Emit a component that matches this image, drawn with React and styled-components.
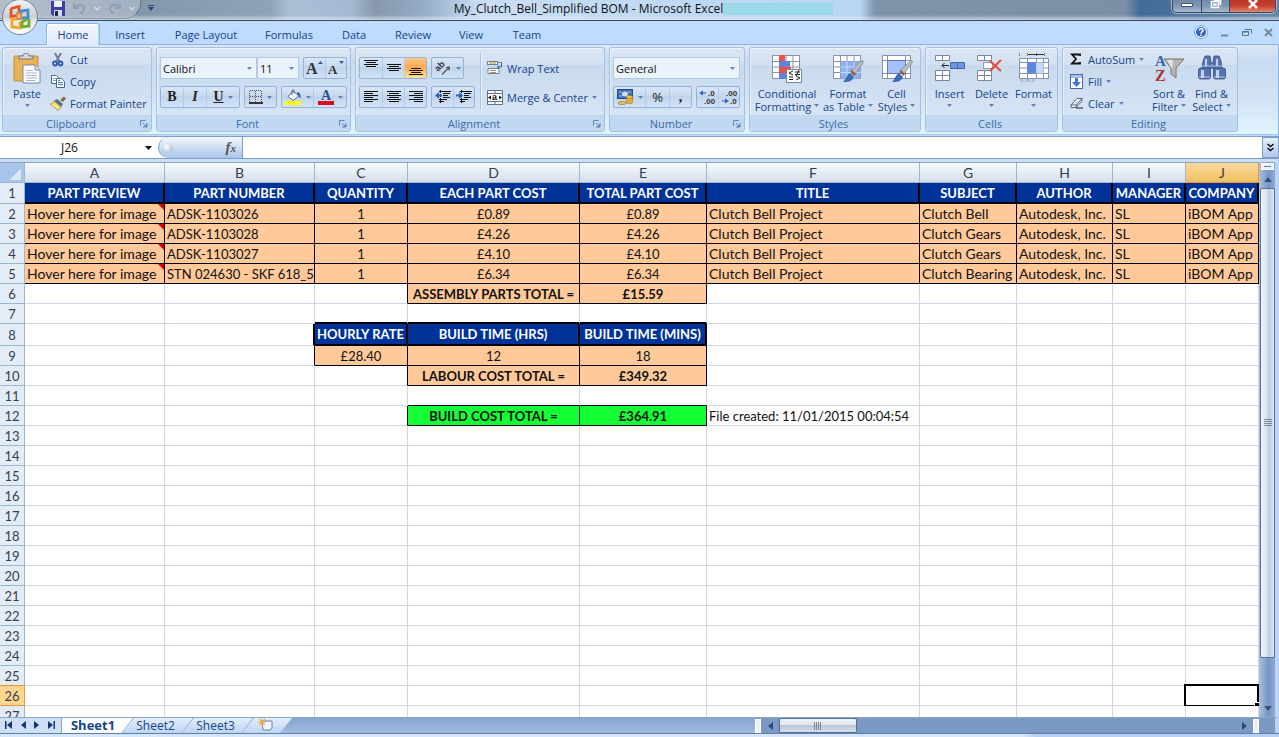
import React, { useState } from 'react';
import styled, { createGlobalStyle } from 'styled-components';

const GlobalStyle = createGlobalStyle`
    * { box-sizing: border-box; }
    body {
        margin: 0;
        font-family: "Open Sans", "Noto Sans", sans-serif;
        font-size: 11px;
        color: #15428b;
        overflow: hidden;
    }
    button, input, select {
        font: inherit;
        color: inherit;
        border: 0;
        margin: 0;
        padding: 0;
        background: none;
        border-radius: 0;
    }
    svg { flex: none; }
`

const Window = styled.div`
    display: flex;
    flex-direction: column;
    height: 100vh;
    background: #bfdbff;
`

/* ---------- title bar ---------- */

const TitleBar = styled.header`
    position: relative;
    display: flex;
    justify-content: space-between;
    align-items: flex-start;
    height: 21px;
    flex: none;
    border-bottom: 1px solid #3c4a5a;
    background:
        linear-gradient(rgba(255, 255, 255, 0) 75%, rgba(225, 235, 245, 0.6) 95%),
        linear-gradient(90deg, #a9b6c4 0, #8496aa 140px, #8fa3b8 270px, #a9bfd6 290px, #a4bad2 350px,
            #8798ad 375px, #93aac6 420px, #c9ddf3 480px, #bfd8f3 700px, #b9d6f5 860px,
            #7f93ab 875px, #7d8fa6 1125px, #436b98 1140px, #5f82a8 100%);
`

const QuickAccess = styled.div`
    display: flex;
    align-items: center;
    height: 19px;
    width: 141px;
    padding: 0 10px 2px 51px;
    gap: 8px;
    border-right: 1px solid #66788c;
    border-bottom: 1px solid #8a9bb0;
    border-radius: 0 0 16px 0;
    background: rgba(185, 195, 206, 0.6);
`

const QuickButton = styled.button`
    display: flex;
    align-items: center;
`

const QuickMore = styled.button`
    display: flex;
    padding: 5px 7px;
`

const TitleText = styled.div`
    display: flex;
    flex: 1;
    justify-content: center;
    align-items: center;
    height: 17px;
    padding-right: 46px;
    font-size: 12px;
    color: #111;
    white-space: nowrap;
`

const Patch = styled.span`
    width: 110px;
    height: 12px;
    background: #9bd8e8;
`

const WindowButtons = styled.div`
    display: flex;
    height: 13px;
    margin-right: 3px;
    border: 1px solid #3b4a5e;
    border-top: 0;
    border-radius: 0 0 5px 5px;
    box-shadow: 0 0 1px 1px rgba(255, 255, 255, 0.5);
    overflow: hidden;
`

const WindowButton = styled.button`
    display: flex;
    justify-content: center;
    align-items: flex-start;
    width: ${props => props.$width};
    border-left: 1px solid #3b4a5e;
    background: ${props => props.$close
        ? 'linear-gradient(#b8392a, #c9402d 50%, #e08a76)'
        : 'linear-gradient(#6f8aa8, #7f98b4 50%, #a7bbd1)'};
    &:first-child { border-left: 0; }
`

const Orb = styled.button`
    position: absolute;
    z-index: 2;
    top: 0;
    left: 2px;
    width: 37px;
    height: 36px;
`

/* ---------- ribbon tabs ---------- */

const TabBar = styled.nav`
    display: flex;
    align-items: flex-end;
    height: 24px;
    flex: none;
    padding-left: 46px;
    background: #bfdbff;
    border-bottom: 1px solid #8db2e3;
`

const Tab = styled.button`
    height: 22px;
    width: ${props => props.$width};
    margin-bottom: -1px;
    padding-bottom: 1px;
    text-align: center;
    border: 1px solid transparent;
    border-bottom: 0;
    border-radius: 3px 3px 0 0;
    ${props => props.$active && `
        background: linear-gradient(#f2f7fe, #dfeafb);
        border-color: #8db2e3;
        box-shadow: inset 1px 1px 0 #fff, inset -1px 0 0 #a8e0f0;
    `}
`

const TabTools = styled.div`
    display: flex;
    align-items: center;
    gap: 12px;
    height: 22px;
    margin-left: auto;
    padding-right: 5px;
    padding-bottom: 2px;
    button { display: flex; }
`

/* ---------- ribbon ---------- */

const Ribbon = styled.div`
    display: flex;
    gap: 4px;
    height: 90px;
    flex: none;
    padding: 2px 2px 3px 2px;
    border-right: 1px solid #8db2e3;
    background: linear-gradient(#dce8f7, #c8dbf1 18%, #d3e3f5 60%, #dff4fc);
    border-bottom: 1px solid #a9c9ec;
`

const Group = styled.section`
    display: flex;
    flex-direction: column;
    width: ${props => props.$width};
    height: 85px;
    border: 1px solid #a5c0e0;
    border-radius: 3px;
    box-shadow: inset 1px 1px 0 rgba(255, 255, 255, 0.5);
    background: linear-gradient(#dbe6f4, #d3e0f1 20%, #c9daee 21%, #dae8f7);
    overflow: hidden;
`

const GroupBody = styled.div`
    display: flex;
    flex: 1;
    padding: ${props => props.$padding || '0 3px'};
    gap: ${props => props.$gap || '0'};
`

const GroupFooter = styled.footer`
    display: flex;
    align-items: center;
    height: 16px;
    padding: 1px 3px 0 0;
    background: #c1d8f0;
    color: #3e6aaa;
    line-height: 15px;
`

const GroupName = styled.span`
    flex: 1;
    text-align: center;
`

const SmallColumn = styled.div`
    display: flex;
    flex-direction: column;
`

const SmallButton = styled.button`
    display: flex;
    align-items: center;
    gap: 4px;
    height: 22px;
    white-space: nowrap;
`

const LargeButton = styled.button`
    display: flex;
    flex: none;
    flex-direction: column;
    align-items: center;
    width: ${props => props.$width};
    padding-top: 5px;
    line-height: 13px;
    white-space: nowrap;
    svg:first-child { margin-bottom: 2px; }
`

const LabelLine = styled.span`
    display: flex;
    align-items: center;
    justify-content: center;
    gap: 3px;
    height: 13px;
`

const ControlStack = styled.div`
    display: flex;
    flex-direction: column;
    gap: 7px;
    padding-top: 9px;
`

const ControlRow = styled.div`
    display: flex;
    gap: ${props => props.$gap || '4px'};
`

const ButtonSet = styled.div`
    display: flex;
    height: 22px;
    border: 1px solid #93b3da;
    border-radius: 2px;
    background: linear-gradient(#d9e6f6, #c6d8ee 45%, #bfd3ec 46%, #d3e3f6);
`

const ToolButton = styled.button`
    display: flex;
    align-items: center;
    justify-content: center;
    gap: 4px;
    width: ${props => props.$width || '22px'};
    color: #222;
    border-left: 1px solid #b3cae6;
    &:first-child { border-left: 0; }
    ${props => props.$on && `
        background: linear-gradient(#fbc58a, #fdab4a 45%, #fdb95c 60%, #ffe390);
    `}
`

const SelectBox = styled.label`
    display: flex;
    align-items: center;
    width: ${props => props.$width};
    height: 22px;
    padding: 0 4px 0 2px;
    border: 1px solid #b3cae6;
    background: #eaf2fb;
    color: #111;
    select {
        flex: 1;
        min-width: 0;
        appearance: none;
        outline: 0;
    }
`

const Divider = styled.div`
    width: 2px;
    height: 56px;
    margin: 5px 1px 0 1px;
    border-left: 1px solid #a5c0e0;
    border-right: 1px solid #f0f6fd;
`

/* ---------- formula bar ---------- */

const FormulaBar = styled.div`
    display: flex;
    height: 23px;
    flex: none;
    margin-top: 1px;
    border-top: 1px solid #7f9fc8;
    border-bottom: 1px solid #7f9fc8;
    background: #fff;
`

const NameBox = styled.label`
    display: flex;
    align-items: center;
    width: 158px;
    padding-right: 6px;
    font-size: 12px;
    color: #111;
    input {
        width: 138px;
        flex: 1;
        padding-right: 6px;
        text-align: center;
    }
`

const FxPanel = styled.div`
    display: flex;
    align-items: center;
    justify-content: space-between;
    width: 85px;
    padding: 0 6px 0 4px;
    border: 1px solid #7f9fc8;
    border-width: 0 1px;
    border-radius: 11px 0 0 11px;
    background: linear-gradient(#f4f8fd, #a9c4e9);
`

const Knob = styled.span`
    width: 10px;
    height: 10px;
    border-radius: 5px;
    background: radial-gradient(circle at 35% 35%, #fff, #9fb0c8);
`

const FxButton = styled.button`
    font: italic bold 15px "Liberation Serif", serif;
    color: #555;
    sub { font-size: 11px; line-height: 0; vertical-align: 0; }
`

const FormulaInput = styled.input`
    flex: 1;
    min-width: 0;
    padding: 0 4px;
`

const ExpandButton = styled.button`
    display: flex;
    align-items: center;
    justify-content: center;
    width: 17px;
    border: 1px solid #7f9fc8;
    background: linear-gradient(#e6effb, #b0c8ea);
`

const BarGap = styled.div`
    height: 3px;
    flex: none;
    background: #cddff5;
`

/* ---------- sheet ---------- */

const SheetArea = styled.main`
    display: flex;
    flex: 1;
    min-height: 0;
`

const GridPane = styled.div`
    flex: 1;
    min-width: 0;
    overflow: hidden;
    background: #fff;
    border-top: 1px solid #8ba5c8;
`

const Grid = styled.table`
    width: 100%;
    table-layout: fixed;
    border-collapse: separate;
    border-spacing: 0;
    font-family: Lato, "Open Sans", sans-serif;
    font-size: 14px;
    line-height: 18px;
    color: #111;
    th, td { padding: 0; }
`

const Corner = styled.th`
    height: 20px;
    background: linear-gradient(135deg, #a9c4e9 50%, #dce8f8 51%) 9px 5px / 12px 12px no-repeat #a9c4e9;
    border-right: 1px solid #9eb6ce;
    border-bottom: 1px solid #9eb6ce;
`

const ColumnHead = styled.th`
    height: 20px;
    font-weight: normal;
    color: #333f50;
    border-right: 1px solid ${props => props.$active ? '#f29536' : '#9eb6ce'};
    border-bottom: 1px solid ${props => props.$active ? '#f29536' : '#9eb6ce'};
    background: ${props => props.$active
        ? 'linear-gradient(#f9d99f, #f1c15f)'
        : 'linear-gradient(#f6fafd, #d5deea)'};
`

const RowHead = styled.th`
    height: ${props => props.$height}px;
    font-size: 13px;
    font-weight: normal;
    color: #333f50;
    border-right: 1px solid ${props => props.$active ? '#f29536' : '#9eb6ce'};
    border-bottom: 1px solid ${props => props.$active || props.$beforeActive ? '#f29536' : '#9eb6ce'};
    background: ${props => props.$active ? '#ffd58d' : '#e4ecf7'};
`

const fills = { head: '#003399', peach: '#ffc999', green: '#14ff36' }

const Cell = styled.td`
    position: relative;
    height: ${props => props.$height}px;
    white-space: nowrap;
    text-align: ${props => props.$align};
    font-weight: ${props => props.$bold ? 'bold' : 'normal'};
    font-size: ${props => props.$small ? '13px' : '14px'};
    color: ${props => props.$fill === 'head' ? '#fff' : '#111'};
    background: ${props => fills[props.$fill] || '#fff'};
    border-right: ${props => props.$right};
    border-bottom: ${props => props.$bottom};
    && { padding: 0 ${props => props.$align === 'left' ? '2px' : '0'}; }
    ${props => props.$note && `
        &::after {
            content: '';
            position: absolute;
            top: 0;
            right: 0;
            border: 3px solid #e00000;
            border-left-color: transparent;
            border-bottom-color: transparent;
        }
    `}
`

const Selection = styled.span`
    position: absolute;
    inset: -2px -1px -2px -2px;
    border: 2px solid #000;
    &::after {
        content: '';
        position: absolute;
        right: -2px;
        bottom: -3px;
        width: 4px;
        height: 5px;
        border: 1px solid #fff;
        border-width: 1px 0 0 1px;
        background: #000;
    }
`

const VScroll = styled.div`
    display: flex;
    flex-direction: column;
    align-items: center;
    width: 20px;
    padding: 1px 0 0 1px;
    border-right: 4px solid #bcd3f5;
    background: linear-gradient(90deg, #a8c0e0, #7796c3 60%, #8aaad6);
`

const SplitBox = styled.span`
    width: ${props => props.$across ? '13px' : '6px'};
    height: ${props => props.$across ? '7px' : '14px'};
    border: 1px solid #fff;
    background: #e9f1fb;
    box-shadow: inset 0 0 0 2px #e9f1fb, inset 0 0 0 4px #5c7fae;
`

const ScrollArrow = styled.button`
    display: flex;
    align-items: center;
    justify-content: center;
    width: 18px;
    height: 18px;
`

const VTrack = styled.div`
    flex: 1;
    width: 15px;
`

const VThumb = styled.div`
    display: flex;
    align-items: center;
    justify-content: center;
    height: 92%;
    border: 1px solid #56719c;
    border-radius: 2px;
    background: linear-gradient(90deg, #eef2f8, #dbe4ee 45%, #bccbdc 60%, #dde7f2);
`

const BottomBar = styled.footer`
    display: flex;
    height: 16px;
    flex: none;
    border-top: 1px solid #8ba5c8;
    border-right: 4px solid #bcd3f5;
    background: linear-gradient(#86a4d2, #a2bbe0);
`

const SheetNav = styled.div`
    display: flex;
    align-items: center;
    justify-content: space-between;
    width: 62px;
    padding: 0 6px 1px 5px;
    border-right: 1px solid #8ba5c8;
    background: #cfe0f6;
    button { display: flex; }
`

const SheetTabs = styled.div`
    display: flex;
    font-size: 13px;
    line-height: 15px;
`

const SheetTab = styled.button`
    height: 15px;
    width: 71px;
    padding-right: ${props => props.$active ? '9px' : '4px'};
    white-space: nowrap;
    font-size: ${props => props.$active ? '13px' : '12px'};
    font-weight: ${props => props.$active ? 'bold' : 'normal'};
    background: linear-gradient(${props => props.$active ? '#fff, #fff' : '#e3eefb, #bfd5f2'});
    clip-path: polygon(0 100%, ${props => props.$active ? '0' : '12px'} 0, 100% 0, calc(100% - 12px) 100%);
    & + & { margin-left: -11px; }
`

const InsertTab = styled(SheetTab)`
    width: 50px;
`

const HScroll = styled.div`
    display: flex;
    align-items: center;
    width: 520px;
    margin-left: auto;
    padding-right: 16px;
    background: #7b99c3;
`

const HTrack = styled.div`
    flex: 1;
    height: 15px;
`

const HThumb = styled.div`
    display: flex;
    align-items: center;
    justify-content: center;
    width: 17%;
    height: 15px;
    border: 1px solid #56719c;
    border-radius: 2px;
    background: linear-gradient(#f0f4f9, #dde5ee 45%, #b9c8d8 50%, #d5dfe9);
`

const StatusBar = styled.div`
    height: 4px;
    flex: none;
    border-top: 1px solid #5b7db1;
    background: linear-gradient(90deg, #d7e6f9 80%, #b7d0f2 81%);
`

/* ---------- icons ---------- */

const Arrow = ({ color = '#5f84b8' }) => (
    <svg width="5" height="3" viewBox="0 0 5 3"><path d="M0 0h5L2.500 3z" fill={color} /></svg>
)

const Chevron = () => (
    <svg width="6" height="5" viewBox="0 0 6 5"><path d="M.5 1L3 4l2.500-3" fill="none" stroke="#f0f4f9" /></svg>
)

const Launcher = () => (
    <svg width="9" height="9" viewBox="0 0 9 9" fill="none" stroke="#5f84b8">
        <path d="M1.500 6.500v-5h5M4 4l3 3M8 4v4H4" />
        <path d="M8 5v3H5z" fill="#5f84b8" stroke="none" />
    </svg>
)

const OfficeIcon = () => (
    <svg width="37" height="36" viewBox="0 0 37 36">
        <defs>
            <linearGradient id="orb" x1="0" y1="0" x2="0" y2="1">
                <stop offset="0" stopColor="#f4f4f6" />
                <stop offset="0.500" stopColor="#c9ced6" />
                <stop offset="0.600" stopColor="#e2e6ea" />
                <stop offset="1" stopColor="#fff" />
            </linearGradient>
        </defs>
        <circle cx="18" cy="17" r="17.500" fill="url(#orb)" stroke="#77808e" />
        <g fill="none" strokeWidth="2.800">
            <path d="M9 8.500l8-2v6M9 8.500v8l5-1" stroke="#e2521d" />
            <path d="M19 14v-3l7-1v8h-6" stroke="#3d8fd0" />
            <path d="M15 19h-5v8l8 1v-6" stroke="#f5a623" />
            <path d="M27 19v7l-7 1v-5l5-3" stroke="#6dab2f" />
            <path d="M15 13l4 1v5h-4z" stroke="#e8852a" strokeWidth="1.800" />
        </g>
    </svg>
)

const SaveIcon = () => (
    <svg width="14" height="15" viewBox="0 0 14 15">
        <path d="M0 0h14v15H2l-2-2z" fill="#3d3fa8" />
        <path d="M3 0h8v6H3z" fill="#eef1fb" />
        <path d="M3 9h8v6H3z" fill="#d9dcee" />
        <path d="M4 10h3v5H4z" fill="#22235e" />
    </svg>
)

const UndoIcon = ({ flip }) => (
    <svg width="13" height="12" viewBox="0 0 13 12">
        <path
            d={flip ? 'M12 1v5H7M11 5C7 1 2 3 2 6s2 5 4 5' : 'M1 1v5h5M2 5c4-4 9-2 9 1s-2 5-4 5'}
            fill="none" stroke="#8d9fb8" strokeWidth="2"
        />
    </svg>
)

const PasteIcon = () => (
    <svg width="28" height="32" viewBox="0 0 28 32">
        <rect x="1" y="3" width="24" height="25" rx="1" fill="#eab257" stroke="#c98d37" />
        <path d="M6 6V3h4c0-4 6-4 6 0h4v3z" fill="#d5d8dd" stroke="#777" />
        <path d="M10 12h12l5 5v13H10z" fill="#fff" stroke="#7489ad" />
        <path d="M22 12v5h5" fill="#dfe7f2" stroke="#7489ad" />
        <path d="M13 17.500h7M13 20h11M13 22.500h11M13 25h11M13 27.500h9" stroke="#a3b1c9" />
    </svg>
)

const CutIcon = () => (
    <svg width="16" height="15" viewBox="-1 0 16 15" fill="none">
        <path d="M4 1l4.500 9M10 1L5 10" stroke="#6e7f99" strokeWidth="2" />
        <circle cx="4" cy="11.500" r="2" stroke="#2a55b0" strokeWidth="1.800" />
        <circle cx="9.500" cy="11.500" r="2" stroke="#2a55b0" strokeWidth="1.800" />
    </svg>
)

const CopyIcon = () => (
    <svg width="16" height="14" viewBox="0 0 16 14" fill="#fff" stroke="#4667a5">
        <path d="M1.500 1.500h5l2 2v6h-7z" />
        <path d="M3 4.500h3M3 6.500h3" stroke="#7fa0d6" />
        <path d="M6.500 4.500h5l3 3v6h-8z" />
        <path d="M8 8.500h5M8 10.500h5M8 6.500h2" stroke="#4f7fd0" />
    </svg>
)

const BrushIcon = () => (
    <svg width="16" height="15" viewBox="0 0 16 15">
        <path d="M10 4l4-3.500 2 2L13 6z" fill="#8d6a35" />
        <path d="M7 3l6 5-2 3-7-6z" fill="#5a6b94" />
        <path d="M4 5l7 6-3 3.500L0 8c2 0 3-1 4-3z" fill="#f4d96b" stroke="#a58736" strokeWidth=".7" />
        <path d="M3 8l5 4" stroke="#fff6c4" />
    </svg>
)

const LetterIcon = ({ size, up }) => (
    <svg width="17" height="16" viewBox="0 0 17 16">
        <text x="0" y="14" fontFamily="Liberation Serif" fontWeight="bold" fontSize={size} fill="#333">A</text>
        <path d={up ? 'M12 4l2.500-3L17 4z' : 'M11 1h5l-2.500 3z'} fill="#2f5aa8" />
    </svg>
)

const BorderIcon = () => (
    <svg width="14" height="14" viewBox="0 0 14 14">
        <path d="M.5 1v11M6.500 1v11M12.500 1v11M1 .5h12M1 6.500h12" stroke="#555" strokeDasharray="1 1" fill="none" />
        <path d="M0 13h14" stroke="#000" strokeWidth="1.500" />
    </svg>
)

const FillIcon = () => (
    <svg width="17" height="16" viewBox="0 0 17 16">
        <path d="M8 2l6 5-6 4.500L3 7.500z" fill="#eef3fa" stroke="#556988" />
        <path d="M7 6V1.500c0-1 2-1 2 0V4" fill="none" stroke="#556988" />
        <path d="M12 3c3 0 4 3 3.500 7-1-1-1-3-3-4z" fill="#2f62b5" />
        <rect y="12" width="16" height="4" fill="#ffff00" />
    </svg>
)

const FontColorIcon = () => (
    <svg width="16" height="16" viewBox="0 0 16 16">
        <text x="3" y="11" fontFamily="Liberation Serif" fontWeight="bold" fontSize="14" fill="#2f4f94">A</text>
        <rect y="12" width="16" height="4" fill="#e30613" />
    </svg>
)

const lineSets = {
    top: [[0, 0, 14], [2, 2, 10], [0, 4, 14], [2, 6, 10]],
    middle: [[0, 4, 14], [2, 6, 10], [0, 8, 14], [2, 10, 10]],
    bottom: [[2, 8, 10], [0, 10, 14], [2, 12, 10], [0, 14, 14]],
    left: [[0, 2, 14], [0, 4, 9], [0, 6, 14], [0, 8, 9], [0, 10, 14], [0, 12, 9]],
    center: [[0, 2, 14], [2, 4, 10], [0, 6, 14], [2, 8, 10], [0, 10, 14], [2, 12, 10]],
    right: [[0, 2, 14], [5, 4, 9], [0, 6, 14], [5, 8, 9], [0, 10, 14], [5, 12, 9]],
}

const LinesIcon = ({ kind }) => (
    <svg width="14" height="16" viewBox="0 0 14 16" fill="#111">
        {lineSets[kind].map(([x, y, w]) => <rect key={y} x={x} y={y} width={w} height="1" />)}
    </svg>
)

const IndentIcon = ({ more }) => (
    <svg width="16" height="14" viewBox="0 0 16 14">
        <path d="M4 1.500h12M8 3.500h7M8 5.500h5M8 7.500h7M4 9.500h8M4 11.500h5" stroke="#111" />
        <path d="M5.500 0v14" stroke="#111" strokeDasharray="1 1" />
        <path d={more ? 'M0 4.500h3V2L7 5.500 3 9V6.500H0z' : 'M7 4.500H4V2L0 5.500 4 9V6.500h3z'} fill="#2f62c5" />
    </svg>
)

const OrientIcon = () => (
    <svg width="17" height="16" viewBox="0 0 17 16">
        <text x="3" y="12" transform="rotate(-45 3 12)" fontSize="9" fontFamily="Liberation Sans" fontWeight="bold" fill="#333">ab</text>
        <path d="M7 14.500L14.500 7M14.500 7l-3.500 .5M14.500 7l-.5 3.500" stroke="#555" fill="none" strokeWidth="1.200" />
    </svg>
)

const WrapIcon = () => (
    <svg width="16" height="16" viewBox="0 0 16 16" fill="#fff" stroke="#6b7fa3">
        <path d="M.5 2.500h13M1 8.500h11v5H1z" />
        <rect x=".5" y="1.500" width="10" height="3" />
        <path d="M2 3h7M3 10.500h6M3 12.500h6" stroke="#b78d35" />
        <path d="M14.500 2v5h-4M12 5.500L10.500 7 12 9" fill="none" stroke="#37558e" />
    </svg>
)

const MergeIcon = () => (
    <svg width="16" height="15" viewBox="0 0 16 15">
        <path d="M.5.5h15v14H.5zM.5 3.500h15M.5 11.500h15M8 .5v3M8 11.500v3" fill="#fff" stroke="#5e7296" />
        <text x="5" y="10" fontSize="9" fontWeight="bold" fontFamily="Liberation Sans" fill="#111">a</text>
        <path d="M4 5.500v4L1 7.500zM12 5.500v4l3-2z" fill="#111" />
    </svg>
)

const MoneyIcon = () => (
    <svg width="17" height="16" viewBox="0 0 17 16">
        <rect x=".5" y=".5" width="15" height="9" fill="#3d6fb5" stroke="#254a85" />
        <path d="M2 3h3M11 3h3M2 7h3" stroke="#a8c4ea" />
        <ellipse cx="8" cy="5" rx="3" ry="2.500" fill="#cfe0f5" />
        <g fill="#f3c04a" stroke="#97701b" strokeWidth=".6">
            <ellipse cx="5" cy="14" rx="4" ry="1.600" />
            <ellipse cx="12.500" cy="13" rx="3.500" ry="1.600" />
            <ellipse cx="12.500" cy="10.500" rx="3.500" ry="1.600" />
            <ellipse cx="12.500" cy="8" rx="3.500" ry="1.600" />
        </g>
    </svg>
)

const DecimalIcon = ({ more }) => (
    <svg width="17" height="15" viewBox="0 0 17 15" fontFamily="Liberation Sans" fontSize="8" fontWeight="bold" fill="#333">
        <text x={more ? 9 : 5} y="6">{more ? '.0' : '.00'}</text>
        <text x={more ? 5 : 9} y="14">{more ? '.00' : '.0'}</text>
        <path d={more ? 'M7 2.500H4V.5L0 3l4 2.500v-2h3z' : 'M1 10.500h3v-2L8 11l-4 2.500v-2H1z'} fill="#2f62c5" />
    </svg>
)

const SheetGrid = ({ children }) => (
    <svg width="32" height="32" viewBox="0 0 32 32">
        <path d="M1.500 2.500h27v23h-27zM1.500 8.500h27M1.500 14h27M1.500 19.500h27M8.500 2.500v23M15 2.500v23M22 2.500v23" fill="#fff" stroke="#8593ae" />
        {children}
    </svg>
)

const ConditionalIcon = () => (
    <SheetGrid>
        <path d="M8 2h6v6H8zM8 14h12v6H8z" fill="#ea5244" />
        <path d="M8 8h11v6H8zM8 20h7v6H8z" fill="#5b83df" />
        <rect x="15.500" y="16.500" width="15" height="13" fill="#fff" stroke="#7d8799" />
        <path d="M22 18l-4 2 4 2M18 24h4M18 26.500h4M24 19h5M24 21.500h5M28 17l-3 6M25 23l4 2-4 2" stroke="#222" fill="none" />
    </SheetGrid>
)

const Paintbrush = () => (
    <g>
        <path d="M29 8c2-1 3 0 2 2l-8 11-4-3z" fill="#b8bcc6" stroke="#777" strokeWidth=".6" />
        <path d="M20 17l4 4-1.500 2-4-4z" fill="#9b5a2c" />
        <path d="M18 20l4 4c-2 5-7 5-11 5 3-2 3-7 7-9z" fill="#3d6bb5" />
    </g>
)

const TableIcon = () => (
    <SheetGrid>
        <path d="M8.500 8.500h20v17h-20z" fill="#8fb0ef" />
        <path d="M15 8.500v17M22 8.500v17M8.500 14h20M8.500 19.500h20" stroke="#c8d9f8" />
        <Paintbrush />
    </SheetGrid>
)

const CellStyleIcon = () => (
    <svg width="32" height="32" viewBox="0 0 32 32">
        <path d="M1.500 2.500h28v23h-28zM1.500 7.500h28M1.500 20.500h28M6.500 2.500v23M24.500 2.500v23" fill="#fff" stroke="#8593ae" />
        <path d="M6.500 7.500h18v13h-18z" fill="#a5c0f6" stroke="#5b79bb" />
        <Paintbrush />
    </svg>
)

const CellBlocks = ({ children }) => (
    <svg width="32" height="32" viewBox="0 0 32 32" fill="#fff" stroke="#7886a0">
        <path d="M1.500 2.500h14v5h-14zM8.500 2.500v5" />
        <path d="M1.500 17.500h14v10h-14zM8.500 17.500v10M1.500 22.500h14" />
        {children}
    </svg>
)

const InsertIcon = () => (
    <CellBlocks>
        <path d="M16.500 9.500h14v6h-14zM23.500 9.500v6" fill="#6f94e3" stroke="#4663ab" />
        <path d="M15 12.500H8M10.500 10L8 12.500l2.500 2.500" fill="none" stroke="#222" />
    </CellBlocks>
)

const DeleteIcon = () => (
    <CellBlocks>
        <path d="M7.500 9.500h9v6h-9z" strokeDasharray="1 1" stroke="#334c9a" />
        <path d="M14 8l11 10M25 7L14 18" stroke="#ea4a35" strokeWidth="2" />
    </CellBlocks>
)

const FormatIcon = () => (
    <svg width="32" height="32" viewBox="0 0 32 32">
        <path d="M1.500 5.500h29v20h-29zM1.500 9.500h29M1.500 20.500h29M9.500 5.500v20M18.500 5.500v4M18.500 20.500v5M25.500 5.500v20M1.500 15h8M25.500 15h5" fill="#fff" stroke="#8593ae" />
        <path d="M9.500 9.500h9v11h-9z" fill="#5d86e0" />
        <path d="M18.500 9.500h7v11h-7z" fill="#c7d9f8" />
        <path d="M1.500 0v4M9.500 0v4M18.500 0v4M26.500 0v4" stroke="#555" strokeDasharray="1 1" />
        <path d="M10 1.500h16" stroke="#333" />
        <path d="M3 26h6v2H3zM10 26h6v2h-6z" fill="#fff" stroke="#8593ae" strokeWidth=".8" />
    </svg>
)

const SumIcon = () => (
    <svg width="14" height="12" viewBox="0 0 14 12">
        <path d="M10 3V1.500H2L6 6l-4 4.500h8V9" fill="none" stroke="#111" strokeWidth="1.800" />
    </svg>
)

const FillDownIcon = () => (
    <svg width="14" height="15" viewBox="0 0 14 15">
        <rect x=".5" y=".5" width="12" height="14" fill="#fff" stroke="#4a68a5" />
        <path d="M1 1h11v3H1z" fill="#a8c0ee" />
        <path d="M5 4h3v4h3l-4.500 5L2 8h3z" fill="#3f74dc" />
    </svg>
)

const EraserIcon = () => (
    <svg width="14" height="12" viewBox="0 0 14 12">
        <path d="M1 8l6-6.500h5L6.500 8zM1 8v2.500h5L12 4V1.500M6.500 8L6 10.500" fill="#fff" stroke="#56647f" />
        <path d="M6 11h7" stroke="#222" />
    </svg>
)

const SortIcon = () => (
    <svg width="32" height="32" viewBox="0 0 32 32">
        <path d="M11 6h20L23 15v10l-5-4v-6z" fill="#b9b6b2" stroke="#77736f" />
        <path d="M14 7h6l-1 9z" fill="#e8e7e5" />
        <text x="2" y="13" fontSize="15" fontWeight="bold" fontFamily="Liberation Serif" fill="#3a63b4">A</text>
        <text x="2" y="28" fontSize="16" fontWeight="bold" fontFamily="Liberation Serif" fill="#b3322c">Z</text>
    </svg>
)

const FindIcon = () => (
    <svg width="32" height="32" viewBox="0 0 32 32" fill="#5674b4" stroke="#344b82" strokeWidth=".8">
        <path d="M9 3h5l1 6v7H6l1-8zM23 3h-5l-1 6v7h9l-1-8z" />
        <rect x="2.500" y="15" width="12" height="11" rx="2" />
        <rect x="17.500" y="15" width="12" height="11" rx="2" />
        <path d="M14 10h4v5h-4z" fill="#7c93c4" />
        <path d="M5 17h3v8H5zM20 17h3v8h-3zM9 6h2v7H9zM20 6h2v7h-2z" fill="#c3d2f0" stroke="none" />
        <path d="M3 24h11M18 24h11M6 13h9M17 13h9" stroke="#d5dff2" />
    </svg>
)

const HelpIcon = () => (
    <svg width="14" height="14" viewBox="0 0 14 14">
        <circle cx="7" cy="7" r="6.500" fill="#fff" stroke="#7c9bd0" />
        <circle cx="7" cy="7" r="5" fill="#2c5fc8" />
        <text x="4" y="11" fontSize="10" fontWeight="bold" fontFamily="Liberation Sans" fill="#fff">?</text>
    </svg>
)

const NewSheetIcon = () => (
    <svg width="15" height="13" viewBox="0 0 15 13">
        <path d="M4 3h10v7l-2 2H5z" fill="#f3f6fb" stroke="#6b7fa8" />
        <path d="M4 0v8M0 4h8M1 1l6 6M7 1L1 7" stroke="#e8a22e" />
    </svg>
)

/* ---------- data ---------- */

const columns = [
    { name: 'A', width: 140 },
    { name: 'B', width: 150 },
    { name: 'C', width: 93 },
    { name: 'D', width: 172 },
    { name: 'E', width: 127 },
    { name: 'F', width: 213 },
    { name: 'G', width: 97 },
    { name: 'H', width: 96 },
    { name: 'I', width: 73 },
    { name: 'J', width: 73 },
]

const headings = ['PART PREVIEW', 'PART NUMBER', 'QUANTITY', 'EACH PART COST', 'TOTAL PART COST',
    'TITLE', 'SUBJECT', 'AUTHOR', 'MANAGER', 'COMPANY']

const parts = [
    { number: 'ADSK-1103026', cost: '£0.89', subject: 'Clutch Bell' },
    { number: 'ADSK-1103028', cost: '£4.26', subject: 'Clutch Gears' },
    { number: 'ADSK-1103027', cost: '£4.10', subject: 'Clutch Gears' },
    { number: 'STN 024630 - SKF 618_5', cost: '£6.34', subject: 'Clutch Bearing' },
]

const cells = {
    C8: { text: 'HOURLY RATE', fill: 'head', bold: true },
    D8: { text: 'BUILD TIME (HRS)', fill: 'head', bold: true },
    E8: { text: 'BUILD TIME (MINS)', fill: 'head', bold: true },
    C9: { text: '£28.40', fill: 'peach' },
    D9: { text: '12', fill: 'peach' },
    E9: { text: '18', fill: 'peach' },
    D6: { text: 'ASSEMBLY PARTS TOTAL =', fill: 'peach', bold: true },
    E6: { text: '£15.59', fill: 'peach', bold: true },
    D10: { text: 'LABOUR COST TOTAL =', fill: 'peach', bold: true },
    E10: { text: '£349.32', fill: 'peach', bold: true },
    D12: { text: 'BUILD COST TOTAL =', fill: 'green', bold: true },
    E12: { text: '£364.91', fill: 'green', bold: true },
    F12: { text: 'File created: 11/01/2015 00:04:54', align: 'left' },
}

columns.forEach((col, i) => {
    cells[`${col.name}1`] = { text: headings[i], fill: 'head', bold: true }
})

parts.forEach((part, i) => {
    const values = ['Hover here for image', part.number, '1', part.cost, part.cost,
        'Clutch Bell Project', part.subject, 'Autodesk, Inc.', 'SL', 'iBOM App']
    columns.forEach((col, j) => {
        cells[`${col.name}${i + 2}`] = {
            text: values[j],
            fill: 'peach',
            align: j >= 2 && j <= 4 ? 'center' : 'left',
            note: j === 0,
        }
    })
})

const rowHeights = { 1: 21, 8: 22 }
const rows = Array.from({ length: 27 }, (_, i) => i + 1)

const getCell = (col, row) => cells[`${columns[col] ? columns[col].name : ''}${row}`] || {}

const isSmall = (cell) => cell.bold || /\d/.test(cell.text || '')

// a border is shared by two cells, so the heavier of them decides its look
const getBorder = (cell, next) => {
    if (cell.fill === 'head' || next.fill === 'head') {
        return '2px solid #000'
    } else if (cell.fill || next.fill) {
        return '1px solid #000'
    }
    return '1px solid #d0d7e5'
}

/* ---------- parts ---------- */

function RibbonGroup({ name, width, launcher, padding, gap, children }) {
    return (
        <Group $width={width} aria-label={name}>
            <GroupBody $padding={padding} $gap={gap}>{children}</GroupBody>
            <GroupFooter>
                <GroupName>{name}</GroupName>
                {launcher && <button aria-label={`${name} options`}><Launcher /></button>}
            </GroupFooter>
        </Group>
    )
}

function Large({ icon, lines, width, below }) {
    return (
        <LargeButton $width={width}>
            {icon}
            {lines.map((line, i) => (
                <LabelLine key={line}>
                    {line}
                    {!below && i === lines.length - 1 && <Arrow />}
                </LabelLine>
            ))}
            {below && <LabelLine><Arrow /></LabelLine>}
        </LargeButton>
    )
}

function Picker({ label, width, options }) {
    return (
        <SelectBox $width={width}>
            <select aria-label={label}>
                {options.map(option => <option key={option}>{option}</option>)}
            </select>
            <Arrow />
        </SelectBox>
    )
}

const BoldText = styled.b`
    font: bold 14px "Liberation Serif", serif;
`

const ItalicText = styled.i`
    font: italic bold 14px "Liberation Serif", serif;
`

const UnderText = styled.u`
    font: bold 14px "Liberation Serif", serif;
`

const PercentText = styled.span`
    font-size: 13px;
`

const EditColumn = styled(SmallColumn)`
    width: 78px;
`

function HomeRibbon() {
    const [vertical, setVertical] = useState('bottom')

    return (
        <Ribbon>
            <RibbonGroup name="Clipboard" width="150px" launcher gap="2px">
                <Large icon={<PasteIcon />} lines={['Paste']} width="42px" below />
                <SmallColumn>
                    <SmallButton><CutIcon />Cut</SmallButton>
                    <SmallButton><CopyIcon />Copy</SmallButton>
                    <SmallButton><BrushIcon />Format Painter</SmallButton>
                </SmallColumn>
            </RibbonGroup>
            <RibbonGroup name="Font" width="195px" launcher>
                <ControlStack>
                    <ControlRow>
                        <ControlRow $gap="0">
                            <Picker label="Font" width="97px" options={['Calibri', 'Arial', 'Cambria']} />
                            <Picker label="Font size" width="42px" options={['11', '12', '14']} />
                        </ControlRow>
                        <ButtonSet>
                            <ToolButton $width="21px" aria-label="Grow font"><LetterIcon size="16" up /></ToolButton>
                            <ToolButton $width="21px" aria-label="Shrink font"><LetterIcon size="13" /></ToolButton>
                        </ButtonSet>
                    </ControlRow>
                    <ControlRow>
                        <ButtonSet>
                            <ToolButton aria-label="Bold"><BoldText>B</BoldText></ToolButton>
                            <ToolButton $width="23px" aria-label="Italic"><ItalicText>I</ItalicText></ToolButton>
                            <ToolButton $width="33px" aria-label="Underline"><UnderText>U</UnderText><Arrow /></ToolButton>
                        </ButtonSet>
                        <ButtonSet>
                            <ToolButton $width="31px" aria-label="Borders"><BorderIcon /><Arrow /></ToolButton>
                        </ButtonSet>
                        <ButtonSet>
                            <ToolButton $width="31px" aria-label="Fill color"><FillIcon /><Arrow /></ToolButton>
                            <ToolButton $width="33px" aria-label="Font color"><FontColorIcon /><Arrow /></ToolButton>
                        </ButtonSet>
                    </ControlRow>
                </ControlStack>
            </RibbonGroup>
            <RibbonGroup name="Alignment" width="250px" launcher gap="4px">
                <ControlStack>
                    <ControlRow>
                        <ButtonSet>
                            {['top', 'middle', 'bottom'].map(kind => (
                                <ToolButton
                                    key={kind}
                                    $on={vertical === kind}
                                    aria-label={`Align ${kind}`}
                                    onClick={() => setVertical(kind)}
                                ><LinesIcon kind={kind} /></ToolButton>
                            ))}
                        </ButtonSet>
                        <ButtonSet>
                            <ToolButton $width="31px" aria-label="Orientation"><OrientIcon /><Arrow /></ToolButton>
                        </ButtonSet>
                    </ControlRow>
                    <ControlRow>
                        <ButtonSet>
                            {['left', 'center', 'right'].map(kind => (
                                <ToolButton key={kind} aria-label={`Align ${kind}`}><LinesIcon kind={kind} /></ToolButton>
                            ))}
                        </ButtonSet>
                        <ButtonSet>
                            <ToolButton $width="21px" aria-label="Decrease indent"><IndentIcon /></ToolButton>
                            <ToolButton $width="21px" aria-label="Increase indent"><IndentIcon more /></ToolButton>
                        </ButtonSet>
                    </ControlRow>
                </ControlStack>
                <Divider />
                <ControlStack>
                    <SmallButton><WrapIcon />Wrap Text</SmallButton>
                    <SmallButton><MergeIcon />Merge &amp; Center<Arrow /></SmallButton>
                </ControlStack>
            </RibbonGroup>
            <RibbonGroup name="Number" width="136px" launcher>
                <ControlStack>
                    <Picker label="Number format" width="127px" options={['General', 'Number', 'Currency']} />
                    <ControlRow>
                        <ButtonSet>
                            <ToolButton $width="31px" aria-label="Accounting format"><MoneyIcon /><Arrow /></ToolButton>
                            <ToolButton $width="24px"><PercentText>%</PercentText></ToolButton>
                            <ToolButton aria-label="Comma style"><BoldText>,</BoldText></ToolButton>
                        </ButtonSet>
                        <ButtonSet>
                            <ToolButton $width="21px" aria-label="Increase decimal"><DecimalIcon more /></ToolButton>
                            <ToolButton $width="21px" aria-label="Decrease decimal"><DecimalIcon /></ToolButton>
                        </ButtonSet>
                    </ControlRow>
                </ControlStack>
            </RibbonGroup>
            <RibbonGroup name="Styles" width="172px">
                <Large icon={<ConditionalIcon />} lines={['Conditional', 'Formatting']} width="68px" />
                <Large icon={<TableIcon />} lines={['Format', 'as Table']} width="54px" />
                <Large icon={<CellStyleIcon />} lines={['Cell', 'Styles']} width="43px" />
            </RibbonGroup>
            <RibbonGroup name="Cells" width="133px">
                <Large icon={<InsertIcon />} lines={['Insert']} width="41px" below />
                <Large icon={<DeleteIcon />} lines={['Delete']} width="43px" below />
                <Large icon={<FormatIcon />} lines={['Format']} width="41px" below />
            </RibbonGroup>
            <RibbonGroup name="Editing" width="176px" padding="0 3px 0 7px" gap="1px">
                <EditColumn>
                    <SmallButton><SumIcon />AutoSum<Arrow /></SmallButton>
                    <SmallButton><FillDownIcon />Fill<Arrow /></SmallButton>
                    <SmallButton><EraserIcon />Clear<Arrow /></SmallButton>
                </EditColumn>
                <Large icon={<SortIcon />} lines={['Sort &', 'Filter']} width="40px" />
                <Large icon={<FindIcon />} lines={['Find &', 'Select']} width="43px" />
            </RibbonGroup>
        </Ribbon>
    )
}

function Sheet() {
    return (
        <GridPane>
            <Grid>
                <colgroup>
                    <col width="25" />
                    {columns.map(col => <col key={col.name} width={col.width} />)}
                </colgroup>
                <thead>
                    <tr>
                        <Corner aria-label="Select all" />
                        {columns.map(col => (
                            <ColumnHead key={col.name} scope="col" $active={col.name === 'J'}>{col.name}</ColumnHead>
                        ))}
                    </tr>
                </thead>
                <tbody>
                    {rows.map(row => (
                        <tr key={row}>
                            <RowHead
                                scope="row"
                                $height={rowHeights[row] || 20}
                                $active={row === 26}
                                $beforeActive={row === 25}
                            >{row}</RowHead>
                            {columns.map((col, i) => {
                                const cell = getCell(i, row)
                                return (
                                    <Cell
                                        key={col.name}
                                        $height={rowHeights[row] || 20}
                                        $align={cell.align || 'center'}
                                        $bold={cell.bold}
                                        $small={isSmall(cell)}
                                        $fill={cell.fill}
                                        $note={cell.note}
                                        $right={getBorder(cell, getCell(i + 1, row))}
                                        $bottom={getBorder(cell, getCell(i, row + 1))}
                                    >
                                        {cell.text}
                                        {col.name === 'J' && row === 26 && <Selection />}
                                    </Cell>
                                )
                            })}
                        </tr>
                    ))}
                </tbody>
            </Grid>
        </GridPane>
    )
}

export default function App() {
    const [sheet, setSheet] = useState('Sheet1')

    return (
        <Window>
            <GlobalStyle />
            <TitleBar>
                <Orb aria-label="Office button"><OfficeIcon /></Orb>
                <QuickAccess>
                    <QuickButton aria-label="Save"><SaveIcon /></QuickButton>
                    <QuickButton aria-label="Undo"><UndoIcon /></QuickButton>
                    <Chevron />
                    <QuickButton aria-label="Redo"><UndoIcon flip /></QuickButton>
                    <Chevron />
                </QuickAccess>
                <QuickMore aria-label="Customize toolbar">
                    <svg width="6" height="6" viewBox="0 0 6 6"><path d="M0 0h6v1H0zM0 2h6L3 6z" fill="#2a4680" /></svg>
                </QuickMore>
                <TitleText>
                    My_Clutch_Bell_Simplified BOM - Microsoft Excel
                    <Patch />
                </TitleText>
                <WindowButtons>
                    <WindowButton $width="28px" aria-label="Minimize">
                        <svg width="12" height="8"><path d="M.5 3.500h11v3H.5z" fill="#fff" stroke="#45556b" /></svg>
                    </WindowButton>
                    <WindowButton $width="28px" aria-label="Restore">
                        <svg width="12" height="9"><path d="M1.500 1.500h7v6h-7zM4 4h2v1H4zM4 0h6.500v5" fill="none" stroke="#fff" strokeWidth="1.600" /></svg>
                    </WindowButton>
                    <WindowButton $width="46px" $close aria-label="Close">
                        <svg width="12" height="9"><path d="M2 0l8 8M10 0L2 8" stroke="#fff" strokeWidth="2.500" /></svg>
                    </WindowButton>
                </WindowButtons>
            </TitleBar>
            <TabBar>
                <Tab $width="54px" $active>Home</Tab>
                <Tab $width="60px">Insert</Tab>
                <Tab $width="92px">Page Layout</Tab>
                <Tab $width="74px">Formulas</Tab>
                <Tab $width="56px">Data</Tab>
                <Tab $width="62px">Review</Tab>
                <Tab $width="54px">View</Tab>
                <Tab $width="58px">Team</Tab>
                <TabTools>
                    <button aria-label="Help"><HelpIcon /></button>
                    <button aria-label="Minimize workbook">
                        <svg width="10" height="10"><path d="M1 8.500h7" stroke="#7b8796" strokeWidth="2" /></svg>
                    </button>
                    <button aria-label="Restore workbook">
                        <svg width="10" height="9"><path d="M3 1.500h6.500v4M.5 3.500h6v4h-6zM.5 4h6" fill="none" stroke="#66717f" /></svg>
                    </button>
                    <button aria-label="Close workbook">
                        <svg width="10" height="9"><path d="M1 1l7 7M8 1L1 8" stroke="#7b8796" strokeWidth="2" /></svg>
                    </button>
                </TabTools>
            </TabBar>
            <HomeRibbon />
            <FormulaBar>
                <NameBox>
                    <input aria-label="Name box" defaultValue="J26" />
                    <svg width="7" height="4"><path d="M0 0h7L3.500 4z" fill="#111" /></svg>
                </NameBox>
                <FxPanel>
                    <Knob />
                    <FxButton aria-label="Insert function">f<sub>x</sub></FxButton>
                </FxPanel>
                <FormulaInput aria-label="Formula" />
                <ExpandButton aria-label="Expand formula bar">
                    <svg width="7" height="9" fill="none" stroke="#111" strokeWidth="1.500"><path d="M.5 1l3 2.500 3-2.500M.5 5l3 2.500 3-2.500" /></svg>
                </ExpandButton>
            </FormulaBar>
            <BarGap />
            <SheetArea>
                <Sheet />
                <VScroll>
                    <SplitBox $across />
                    <ScrollArrow aria-label="Scroll up">
                        <svg width="8" height="5"><path d="M0 5h8L4 0z" fill="#3d4f7c" /></svg>
                    </ScrollArrow>
                    <VTrack>
                        <VThumb>
                            <svg width="8" height="8"><path d="M0 .5h8M0 2.500h8M0 4.500h8M0 6.500h8" stroke="#7c8897" /></svg>
                        </VThumb>
                    </VTrack>
                    <ScrollArrow aria-label="Scroll down">
                        <svg width="8" height="5"><path d="M0 0h8L4 5z" fill="#3d4f7c" /></svg>
                    </ScrollArrow>
                </VScroll>
            </SheetArea>
            <BottomBar>
                <SheetNav>
                    <button aria-label="First sheet"><svg width="7" height="8" fill="#15357a"><path d="M0 0h1.500v8H0zM7 0v8L2 4z" /></svg></button>
                    <button aria-label="Previous sheet"><svg width="5" height="8" fill="#15357a"><path d="M5 0v8L0 4z" /></svg></button>
                    <button aria-label="Next sheet"><svg width="5" height="8" fill="#15357a"><path d="M0 0v8l5-4z" /></svg></button>
                    <button aria-label="Last sheet"><svg width="7" height="8" fill="#15357a"><path d="M5.500 0H7v8H5.500zM0 0v8l5-4z" /></svg></button>
                </SheetNav>
                <SheetTabs>
                    {['Sheet1', 'Sheet2', 'Sheet3'].map(name => (
                        <SheetTab
                            key={name}
                            $active={sheet === name}
                            onClick={() => setSheet(name)}
                        >{name}</SheetTab>
                    ))}
                    <InsertTab aria-label="Insert sheet"><NewSheetIcon /></InsertTab>
                </SheetTabs>
                <HScroll>
                    <SplitBox />
                    <ScrollArrow aria-label="Scroll left">
                        <svg width="5" height="8"><path d="M5 0v8L0 4z" fill="#2f477c" /></svg>
                    </ScrollArrow>
                    <HTrack>
                        <HThumb>
                            <svg width="8" height="8"><path d="M.5 0v8M2.500 0v8M4.500 0v8M6.500 0v8" stroke="#7c8897" /></svg>
                        </HThumb>
                    </HTrack>
                    <ScrollArrow aria-label="Scroll right">
                        <svg width="5" height="8"><path d="M0 0v8l5-4z" fill="#2f477c" /></svg>
                    </ScrollArrow>
                    <SplitBox />
                </HScroll>
            </BottomBar>
            <StatusBar />
        </Window>
    )
}
